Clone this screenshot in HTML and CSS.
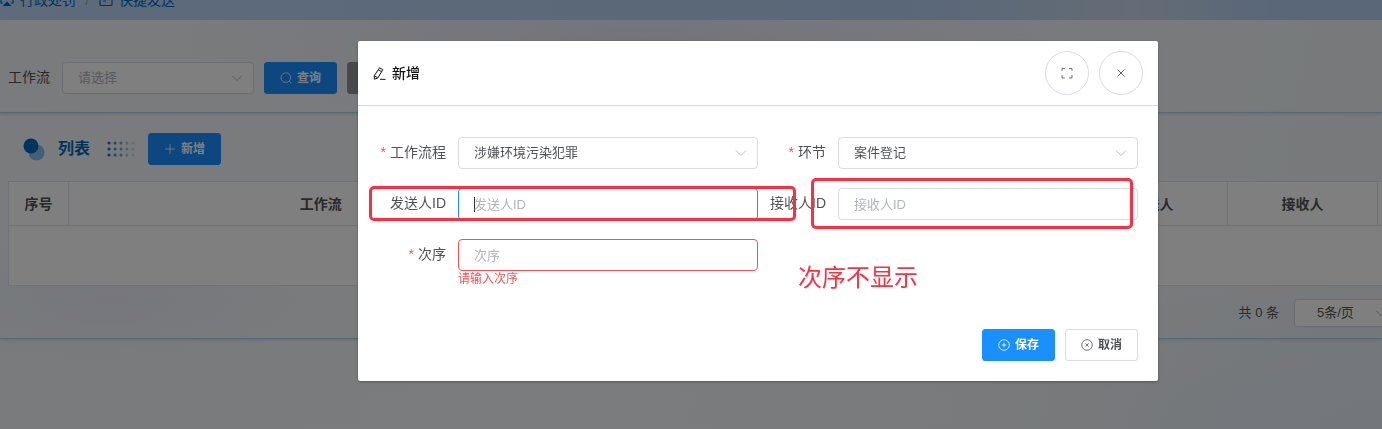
FILE: index.html
```
<!DOCTYPE html>
<html lang="zh-CN">
<head>
<meta charset="utf-8">
<meta name="viewport" content="width=device-width, initial-scale=1">
<title>快捷发送</title>
<link rel="stylesheet" href="styles.css">
</head>
<body>
<svg class="sprite" aria-hidden="true">
  <symbol id="chevron" viewBox="0 0 12 12"><path d="M1 3.5l5 5 5-5" fill="none" stroke="currentColor"/></symbol>
</svg>
<main class="page">
  <nav class="crumbs" aria-label="面包屑">
    <a href="#penalty"><svg class="crumb-icon" viewBox="0 0 14 14" fill="none" stroke="currentColor"><path d="M3 1H1v9h2M11 1h2v9h-2" stroke-width="1.2"/><path d="M2.5 13L7 8.500l4.500 4.500zM5 5a2 2 0 1 0 4 0 2 2 0 0 0-4 0" fill="currentColor" stroke="none"/></svg>行政处罚</a>
    <span class="slash">/</span>
    <a href="#send"><svg class="crumb-icon" viewBox="0 0 14 14" fill="none" stroke="currentColor"><rect x="1" y="1" width="12" height="11.5" rx="1" stroke-width="1.2"/><path d="M4 8h3M7 4l3 1-2 2" stroke-width="1.2"/></svg>快捷发送</a>
  </nav>
  <section class="search">
    <label for="flow-filter">工作流</label>
    <span class="select filter">
      <select id="flow-filter" class="empty"><option>请选择</option></select>
      <svg class="chev"><use href="#chevron"/></svg>
    </span>
    <button class="btn primary" type="button"><svg viewBox="0 0 12 12" fill="none" stroke="currentColor" stroke-width=".8"><circle cx="5.8" cy="5.6" r="4.8"/><path d="M9.300 9.100l2 2"/></svg>查询</button>
    <button class="btn dark" type="button"><svg viewBox="0 0 12 12" fill="none" stroke="currentColor" stroke-width=".8"><path d="M10.5 3A5 5 0 1 0 11 7M10.5 0v3h-3"/></svg>重置</button>
  </section>
  <section class="list">
    <header class="list-head">
      <svg class="circles" viewBox="0 0 22 23"><circle cx="13.5" cy="14.5" r="8" fill="#86bfef"/><circle cx="8" cy="8" r="7.5" fill="#0068c0"/></svg>
      <h2>列表</h2>
      <svg class="dots" viewBox="0 0 28 16"><g fill="#1677c8"><g><circle cx="2" cy="2" r="1.6"/><circle cx="2" cy="8" r="1.6"/><circle cx="2" cy="14" r="1.6"/></g><g opacity=".8"><circle cx="8" cy="2" r="1.5"/><circle cx="8" cy="8" r="1.5"/><circle cx="8" cy="14" r="1.5"/></g><g opacity=".6"><circle cx="14" cy="2" r="1.5"/><circle cx="14" cy="8" r="1.5"/><circle cx="14" cy="14" r="1.5"/></g><g opacity=".35"><circle cx="20" cy="2" r="1.5"/><circle cx="20" cy="8" r="1.5"/><circle cx="20" cy="14" r="1.5"/></g><g opacity=".2"><circle cx="26" cy="2" r="1.5"/><circle cx="26" cy="8" r="1.5"/><circle cx="26" cy="14" r="1.5"/></g></g></svg>
      <button class="btn primary" type="button"><svg viewBox="0 0 12 12" fill="none" stroke="currentColor" stroke-width=".8"><path d="M6 1v10M1 6h10"/></svg>新增</button>
    </header>
    <div class="table-wrap">
      <table>
        <colgroup><col class="col-no"><col><col><col class="col-person"><col class="col-person"><col class="col-person"></colgroup>
        <thead><tr><th>序号</th><th>工作流</th><th>环节</th><th>发送人</th><th>接收人</th><th>操作</th></tr></thead>
        <tbody><tr><td colspan="6"></td></tr></tbody>
      </table>
    </div>
    <footer class="pager">
      <span>共 0 条</span>
      <span class="select size"><select aria-label="每页条数"><option>5条/页</option></select><svg class="chev"><use href="#chevron"/></svg></span>
    </footer>
  </section>
</main>

<div class="overlay">
  <div class="dialog" role="dialog" aria-modal="true" aria-labelledby="dialog-title">
    <header class="dialog-head">
      <svg class="edit" viewBox="0 0 13 13" fill="none" stroke="currentColor"><path d="M6.6.8l3.200 1.800-5 8.400-3.300 1.200-.3-3.500zM5.400 2.900l3.200 1.800M1.200 8.700l3.200 2M7 12.300h5.500"/></svg>
      <h1 id="dialog-title">新增</h1>
      <button class="round" type="button" aria-label="全屏"><svg viewBox="0 0 12 12" fill="none" stroke="currentColor" stroke-width=".9"><path d="M1 4V1.500h3M8 1.500h3V4M11 8v3H8M4 11H1V8"/></svg></button>
      <button class="round" type="button" aria-label="关闭"><svg viewBox="0 0 12 12" fill="none" stroke="currentColor"><path d="M2.500 2.500l7 7M9.500 2.500l-7 7"/></svg></button>
    </header>
    <form class="form">
      <div class="field"><label class="required" for="flow">工作流程</label>
        <span class="select"><select id="flow"><option>涉嫌环境污染犯罪</option></select><svg class="chev"><use href="#chevron"/></svg></span></div>
      <div class="field"><label class="required" for="step">环节</label>
        <span class="select"><select id="step"><option>案件登记</option></select><svg class="chev"><use href="#chevron"/></svg></span></div>
      <div class="field"><label for="sender">发送人ID</label><input class="active" id="sender" type="text" placeholder="发送人ID"></div>
      <div class="field"><label for="receiver">接收人ID</label><input id="receiver" type="text" placeholder="接收人ID"></div>
      <div class="field"><label class="required" for="order">次序</label><input class="invalid" id="order" type="text" placeholder="次序" aria-describedby="order-error"><p class="error" id="order-error">请输入次序</p></div>
    </form>
    <footer class="dialog-foot">
      <button class="btn primary" type="button"><svg viewBox="0 0 12 12" fill="none" stroke="currentColor" stroke-width=".8"><circle cx="6" cy="6" r="5.3"/><path d="M6 3.700v4.600M3.700 6h4.600"/></svg>保存</button>
      <button class="btn" type="button"><svg viewBox="0 0 12 12" fill="none" stroke="currentColor" stroke-width=".8"><circle cx="6" cy="6" r="5.3"/><path d="M4.400 4.400l3.200 3.200M7.600 4.400L4.400 7.600"/></svg>取消</button>
    </footer>
    <div class="mark mark-sender"></div>
    <div class="mark mark-receiver"></div>
    <p class="note">次序不显示</p>
  </div>
</div>
</body>
</html>
```
FILE: styles.css
```
* { box-sizing: border-box; }
body {
  margin: 0;
  font: 14px/20px "Liberation Sans", "Noto Sans CJK SC", sans-serif;
  color: #505256;
}
h1, h2, p { margin: 0; }
button, input, select { font: inherit; color: inherit; }
.sprite { position: absolute; width: 0; height: 0; }

.page {
  min-height: 100vh;
  overflow: hidden;
  background:
    radial-gradient(ellipse 220px 60px at 110px 300px, rgba(230, 236, 248, .7), rgba(230, 236, 248, 0)),
    radial-gradient(ellipse 460px 100px at 640px 40px, rgba(222, 230, 246, .8), rgba(222, 230, 246, 0)),
    radial-gradient(ellipse 400px 160px at 1382px 429px, rgba(226, 234, 246, .7), rgba(226, 234, 246, 0)),
    linear-gradient(100deg, #f2f6f9, #f6f8fb 45%, #eef3f7);
}
.crumbs {
  display: flex;
  align-items: center;
  gap: 8px;
  height: 40px;
  margin-top: -20px;
  background: linear-gradient(90deg, #bad6f4, #b4cff0 65%, #c8d9ec 82%, #b4cff0 92%);
}
.crumbs a {
  display: flex;
  align-items: center;
  gap: 6px;
  color: #0068c0;
  text-decoration: none;
}
.crumb-icon { width: 14px; height: 14px; }
.slash { width: 7px; color: #a09aa0; text-align: center; }

.search {
  display: flex;
  align-items: center;
  gap: 10px;
  padding: 42px 8px 18px;
  border-bottom: 1px solid #aed0ee;
  box-shadow: 0 1px 3px #c4daee;
}
.search label { margin-right: 2px; padding-bottom: 2px; }
.filter { width: 192px; }

.list {
  padding: 20px 0 11px 8px;
  border-bottom: 1px solid #aed0ee;
  box-shadow: 0 1px 3px #c4daee;
}
.list-head { display: flex; align-items: center; gap: 13px; padding-left: 15px; }
.list-head h2 { font-size: 16px; line-height: 24px; color: #0068c0; }
.circles { width: 22px; height: 23px; }
.dots { width: 28px; height: 16px; margin-left: 4px; }
.table-wrap { margin-top: 16px; }
table {
  width: calc(100% + 146px);
  table-layout: fixed;
  border-collapse: collapse;
  background: #fff;
}
.col-no { width: 60px; }
.col-person { width: 150px; }
th, td { height: 44px; padding: 0; border: 1px solid #e2e5ee; text-align: center; }
td { height: 60px; }
.pager {
  display: flex;
  justify-content: flex-end;
  align-items: center;
  gap: 15px;
  margin: 13px -12px 0 0;
  font-size: 13px;
}

.select { position: relative; display: flex; flex: 1; min-width: 0; }
.search .filter { flex: 0 1 192px; }
.size { flex: 0 0 100px; }
select, input {
  width: 100%;
  min-width: 0;
  height: 32px;
  padding: 0 15px;
  border: 1px solid #d9dbe6;
  border-radius: 4px;
  background: #fff;
  font-size: 13px;
  outline: 0;
  appearance: none;
}
.size select { height: 28px; padding: 0 22px; }
select.empty, ::placeholder { color: #b0b4bd; opacity: 1; }
.chev {
  position: absolute;
  top: 50%;
  right: 11px;
  width: 12px;
  height: 12px;
  margin-top: -6px;
  color: #b8bcc6;
  pointer-events: none;
}
.size .chev { right: 7px; }

.btn {
  display: inline-flex;
  align-items: center;
  gap: 5px;
  height: 32px;
  padding: 0 15px;
  border: 1px solid #d9dbe6;
  border-radius: 3px;
  background: #fff;
  font-size: 12px;
  font-weight: 700;
  line-height: 16px;
  white-space: nowrap;
}
.btn svg { width: 12px; height: 12px; }
.primary { border-color: #1890ff; background: #1890ff; color: #fff; }
.dark { border-color: #909399; background: #909399; color: #fff; }

.overlay {
  position: fixed;
  inset: 0;
  display: flex;
  justify-content: center;
  align-items: flex-start;
  padding: 41px 0 0 134px;
  background: rgba(0, 0, 0, .5);
}
.dialog {
  position: relative;
  width: 800px;
  max-width: 100%;
  border-radius: 2px;
  background: #fff;
  box-shadow: 0 1px 3px rgba(0, 0, 0, .3);
}
.dialog-head {
  display: flex;
  align-items: center;
  gap: 10px;
  padding: 10px 15px;
  border-bottom: 1px solid #d8d9dd;
  color: #111;
}
.dialog-head h1 { flex: 1; margin-left: -4px; font-size: 14px; font-weight: 500; line-height: 20px; }
.edit { width: 13px; height: 13px; }
.round {
  display: grid;
  place-items: center;
  width: 44px;
  height: 44px;
  padding: 0;
  border: 1px solid #d9dbe6;
  border-radius: 50%;
  background: #fff;
  color: #606266;
}
.round svg { width: 12px; height: 12px; }
.form {
  display: grid;
  grid-template-columns: 1fr 1fr;
  row-gap: 19px;
  padding: 31px 20px 42px;
}
.field { display: grid; grid-template-columns: 80px 1fr; align-items: center; }
.field label { padding: 0 12px 2px 0; text-align: right; white-space: nowrap; }
.required::before { content: "*"; margin-right: 4px; color: #ff4d4f; }
.error { grid-column: 2; font-size: 12px; line-height: 16px; color: #ff4d4f; }
.active {
  border-color: #1890ff;
  background: linear-gradient(#333, #333) 15px center / 1px 15px no-repeat #fff;
}
.invalid { border-color: #ff4d4f; }
.dialog-foot { display: flex; justify-content: flex-end; gap: 10px; padding: 0 20px 20px; }

.mark { position: absolute; border: 3px solid #ff2d40; border-radius: 5px; pointer-events: none; }
.mark-sender { left: 11px; top: 145px; width: 427px; height: 35px; }
.mark-receiver { left: 453px; top: 137px; width: 322px; height: 51px; }
.note { position: absolute; left: 440px; top: 221px; font-size: 24px; line-height: 32px; color: #ff2d40; }
```
